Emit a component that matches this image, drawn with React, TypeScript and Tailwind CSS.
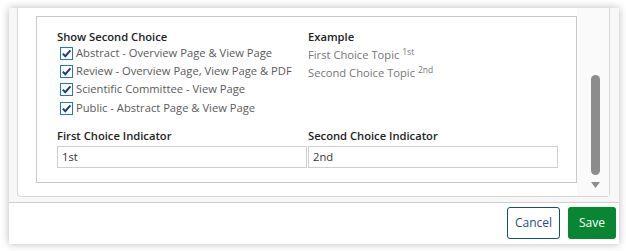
import React from 'react';

const options = [
  'Abstract - Overview Page & View Page',
  'Review - Overview Page, View Page & PDF',
  'Scientific Committee - View Page',
  'Public - Abstract Page & View Page',
];

const CheckBox: React.FC = () => (
  <span className="w-[13px] h-[13px] border-[1.5px] border-[#1c78cf] bg-white flex items-center justify-center shrink-0">
    <svg width="11" height="11" viewBox="0 0 11 11">
      <path d="M1.8 5.6 L4.3 8.2 L9.4 2.4" fill="none" stroke="#1d3f75" strokeWidth="2" />
    </svg>
  </span>
);

export default function App() {
  return (
    <div
      className="w-[626px] h-[251px] bg-white pt-[8px] pl-[9px] overflow-hidden"
      style={{ fontFamily: '"Open Sans", "Liberation Sans", sans-serif' }}
    >
      <div className="w-[610px] h-[236px] bg-[#f7f7f7] shadow-[0_0_8px_rgba(0,0,0,0.28)] flex flex-col">
        {/* Scroll area */}
        <div className="h-[194px] pl-[8px] pr-[9px] pb-[5px]">
          <div className="h-full bg-white border-x border-b border-[#d6d6d6] rounded-b-[4px] flex">
            <div className="flex-1 pl-[18px] pt-[8px]">
              <div className="w-[541px] h-[167px] border border-[#c8c8c8] pl-[20px] pt-[12px]">
                <div className="grid grid-cols-[251px_251px]">
                  <div>
                    <div className="text-[11.2px] leading-[15px] font-semibold text-[#222]">Show Second Choice</div>
                    {options.map((o) => (
                      <div key={o} className="h-[18.3px] flex items-center gap-[3px] pl-[3px]">
                        <CheckBox />
                        <span className="text-[11.2px] text-[#5a5a5a] whitespace-nowrap">{o}</span>
                      </div>
                    ))}
                  </div>
                  <div>
                    <div className="text-[11.2px] leading-[15px] font-semibold text-[#222]">Example</div>
                    <div className="mt-[2px] text-[11.2px] leading-[18px] text-[#757575]">
                      First Choice Topic <sup className="text-[8.5px]">1st</sup>
                    </div>
                    <div className="text-[11.2px] leading-[18px] text-[#757575]">
                      Second Choice Topic <sup className="text-[8.5px]">2nd</sup>
                    </div>
                  </div>
                </div>
                <div className="grid grid-cols-[251px_251px] mt-[11px]">
                  <div>
                    <div className="text-[11.2px] leading-[16px] font-semibold text-[#222]">First Choice Indicator</div>
                    <div className="mt-[2px] w-[250px] h-[22px] border border-[#cfcfcf] px-[4px] flex items-center text-[11.2px] text-[#333]">
                      1st
                    </div>
                  </div>
                  <div>
                    <div className="text-[11.2px] leading-[16px] font-semibold text-[#222]">Second Choice Indicator</div>
                    <div className="mt-[2px] w-[250px] h-[22px] border border-[#cfcfcf] px-[4px] flex items-center text-[11.2px] text-[#333]">
                      2nd
                    </div>
                  </div>
                </div>
              </div>
            </div>
            {/* Scrollbar */}
            <div className="w-[32px] bg-[#fafafa] flex flex-col items-center pl-[4px] pt-[67px]">
              <div className="w-[9px] h-[100px] rounded-full bg-[#8c8c8c]" />
              <svg width="9" height="7" viewBox="0 0 9 7" className="mt-[7px]">
                <path d="M0 0 L9 0 L4.5 6 Z" fill="#8f8f8f" />
              </svg>
            </div>
          </div>
        </div>
        {/* Footer */}
        <div className="flex-1 bg-white border-t border-[#cfcfcf] flex items-center justify-end gap-[8px] pr-[3px] pb-[1px]">
          <button className="w-[53px] h-[32px] border border-[#124b8b] rounded-[3px] bg-white text-[12px] text-[#1a4f8b]">
            Cancel
          </button>
          <button className="w-[48px] h-[32px] rounded-[3px] bg-[#088631] text-[12px] text-white">
            Save
          </button>
        </div>
      </div>
    </div>
  );
}
